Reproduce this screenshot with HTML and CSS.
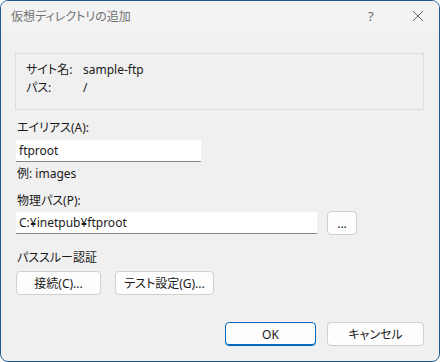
FILE: index.html
```html
<!DOCTYPE html>
<html lang="ja">
<head>
<meta charset="utf-8">
<link rel="stylesheet" href="styles.css">
</head>
<body>
<div class="window">
  <div class="titlebar">
    <span class="title">仮想ディレクトリの追加</span>
    <span class="help">?</span>
    <span class="close">
      <svg width="12" height="12" viewBox="0 0 12 12"><path d="M1 1L11 11M11 1L1 11" stroke="#6b6b6b" stroke-width="1" fill="none"/></svg>
    </span>
  </div>
  <div class="content">
    <div class="group">
      <div class="info-row"><span class="info-label">サイト名:</span><span>sample-ftp</span></div>
      <div class="info-row"><span class="info-label">パス:</span><span>/</span></div>
    </div>
    <div class="label first">エイリアス(A):</div>
    <div class="input alias">ftproot</div>
    <div class="hint">例: images</div>
    <div class="label">物理パス(P):</div>
    <div class="path-row">
      <div class="input path">C:¥inetpub¥ftproot</div>
      <div class="btn browse">...</div>
    </div>
    <div class="label section">パススルー認証</div>
    <div class="btn-row">
      <div class="btn connect">接続(C)...</div>
      <div class="btn test">テスト設定(G)...</div>
    </div>
    <div class="footer">
      <div class="btn ok">OK</div>
      <div class="btn cancel">キャンセル</div>
    </div>
  </div>
</div>
</body>
</html>
```
FILE: styles.css
```css
html, body {
  margin: 0;
  padding: 0;
  background: #ffffff;
}
body {
  font-family: "Segoe UI", "Noto Sans", "Noto Sans CJK JP", sans-serif;
  font-size: 12px;
  color: #1a1a1a;
  font-feature-settings: "palt";
  white-space: nowrap;
}
.window {
  box-sizing: border-box;
  width: 440px;
  height: 362px;
  border: 1px solid #1f5b91;
  border-radius: 8px;
  background: #f0f0f0;
  overflow: hidden;
}
.titlebar {
  height: 30px;
  background: #f3f3f3;
  display: flex;
  align-items: center;
  padding-left: 10px;
}
.title {
  color: #707070;
  flex: 1;
  font-size: 12px;
}
.help {
  color: #6b6b6b;
  width: 12px;
  font-size: 13px;
  margin-right: 32px;
}
.close {
  width: 12px;
  height: 12px;
  margin-right: 15px;
  display: flex;
}
.content {
  padding: 0 15px 0 14px;
}
.group {
  margin-top: 22px;
  border: 1px solid #dcdcdc;
  padding: 7px 10px 0 10px;
  box-sizing: border-box;
  height: 57px;
}
.info-row {
  display: flex;
  height: 18px;
  line-height: 18px;
}
.info-label {
  flex: none;
  width: 57px;
}
.label {
  line-height: 18px;
  height: 18px;
  margin-top: 9px;
  padding-left: 2px;
}
.label.section {
  margin-top: 14px;
}
.input {
  box-sizing: border-box;
  height: 22px;
  background: #ffffff;
  border-bottom: 1px solid #868686;
  line-height: 21px;
  padding-left: 3px;
  margin-left: 1px;
}
.alias {
  width: 185px;
  margin-top: 3px;
}
.hint {
  line-height: 18px;
  height: 18px;
  margin-top: 3px;
  padding-left: 2px;
}
.path-row {
  display: flex;
  align-items: center;
  margin-top: 1px;
  height: 24px;
  gap: 10px;
}
.path {
  width: 301px;
}
.btn {
  box-sizing: border-box;
  height: 24px;
  background: #fdfdfd;
  border: 1px solid #d0d0d0;
  border-radius: 4px;
  display: flex;
  align-items: center;
  justify-content: center;
}
.browse {
  width: 30px;
}
.btn-row {
  display: flex;
  gap: 14px;
  margin-top: 4px;
  padding-left: 1px;
}
.connect {
  width: 85px;
}
.test {
  width: 99px;
}
.footer {
  display: flex;
  justify-content: flex-end;
  gap: 11px;
  margin-top: 27px;
}
.ok {
  width: 91px;
  border: 1px solid #0067c0;
  box-shadow: inset 0 -1px 0 #0067c0;
}
.cancel {
  width: 97px;
}
```
